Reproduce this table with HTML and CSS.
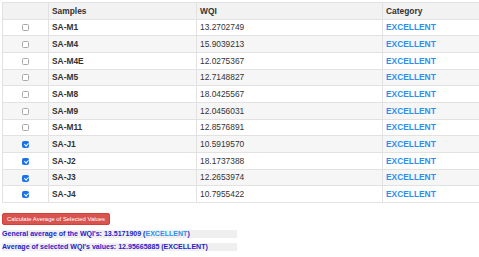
FILE: index.html
```html
<!DOCTYPE html>
<html>
<head>
<meta charset="utf-8">
<link rel="stylesheet" href="styles.css">
</head>
<body>
<div class="page">
  <table class="samples">
    <colgroup>
      <col class="c-check">
      <col class="c-name">
      <col class="c-wqi">
      <col class="c-cat">
    </colgroup>
    <tbody>
      <tr class="head"><th></th><th>Samples</th><th>WQI</th><th>Category</th></tr>
      <tr><td class="chk"><input type="checkbox"></td><td class="name">SA-M1</td><td>13.2702749</td><td class="cat">EXCELLENT</td></tr>
      <tr><td class="chk"><input type="checkbox"></td><td class="name">SA-M4</td><td>15.9039213</td><td class="cat">EXCELLENT</td></tr>
      <tr><td class="chk"><input type="checkbox"></td><td class="name">SA-M4E</td><td>12.0275367</td><td class="cat">EXCELLENT</td></tr>
      <tr><td class="chk"><input type="checkbox"></td><td class="name">SA-M5</td><td>12.7148827</td><td class="cat">EXCELLENT</td></tr>
      <tr><td class="chk"><input type="checkbox"></td><td class="name">SA-M8</td><td>18.0425567</td><td class="cat">EXCELLENT</td></tr>
      <tr><td class="chk"><input type="checkbox"></td><td class="name">SA-M9</td><td>12.0456031</td><td class="cat">EXCELLENT</td></tr>
      <tr><td class="chk"><input type="checkbox"></td><td class="name">SA-M11</td><td>12.8576891</td><td class="cat">EXCELLENT</td></tr>
      <tr><td class="chk"><input type="checkbox" checked></td><td class="name">SA-J1</td><td>10.5919570</td><td class="cat">EXCELLENT</td></tr>
      <tr><td class="chk"><input type="checkbox" checked></td><td class="name">SA-J2</td><td>18.1737388</td><td class="cat">EXCELLENT</td></tr>
      <tr><td class="chk"><input type="checkbox" checked></td><td class="name">SA-J3</td><td>12.2653974</td><td class="cat">EXCELLENT</td></tr>
      <tr><td class="chk"><input type="checkbox" checked></td><td class="name">SA-J4</td><td>10.7955422</td><td class="cat">EXCELLENT</td></tr>
    </tbody>
  </table>
  <button class="calc" type="button">Calculate Average of Selected Values</button>
  <div class="result">General average of the WQI's: 13.5171909 (<span class="light">EXCELLENT</span>)</div>
  <div class="result">Average of selected WQI's values: 12.95665885 (EXCELLENT)</div>
</div>
</body>
</html>
```
FILE: styles.css
```css
html, body {
  margin: 0;
  padding: 0;
  background: #ffffff;
}
.page {
  padding: 2px 0 0 2px;
  font-family: "Liberation Sans", Arial, sans-serif;
  color: #333333;
}
.samples {
  border-collapse: collapse;
  table-layout: fixed;
  width: 479px;
  font-size: 8.4px;
}
.c-check { width: 46px; }
.c-name { width: 148px; }
.c-wqi { width: 186px; }
.c-cat { width: 99px; }
.samples th,
.samples td {
  border: 1px solid #e2e2e2;
  padding: 2.5px 3px;
  line-height: 10.67px;
  height: 10.67px;
  text-align: left;
  vertical-align: middle;
  white-space: nowrap;
}
.samples th {
  font-weight: bold;
  color: #333333;
}
.samples tr:nth-child(odd) {
  background: #f6f6f6;
}
.samples tr.head {
  background: #f2f2f2;
}
.samples td.chk {
  text-align: center;
  padding: 0;
}
.samples td.chk input {
  -webkit-appearance: none;
  appearance: none;
  position: relative;
  box-sizing: border-box;
  width: 7px;
  height: 7px;
  margin: 0;
  vertical-align: middle;
  border: 1px solid #a8a8a8;
  border-radius: 1.5px;
  background: #ffffff;
}
.samples td.chk input:checked {
  background: #1a73e8;
  border-color: #1a73e8;
}
.samples td.chk input:checked::after {
  content: "";
  position: absolute;
  left: 1.5px;
  top: 0px;
  width: 1.5px;
  height: 3px;
  border: solid #ffffff;
  border-width: 0 1px 1px 0;
  transform: rotate(45deg);
}
.samples td.name {
  font-weight: bold;
}
.samples td.cat {
  font-weight: bold;
  color: #2b8ff0;
}
.calc {
  display: block;
  margin: 10px 0 0 0;
  padding: 1.5px 4px;
  font-family: "Liberation Sans", Arial, sans-serif;
  font-size: 5.9px;
  line-height: 7px;
  color: #ffffff;
  background: #d9534f;
  border: 1px solid #d43f3a;
  border-radius: 2px;
}
.result {
  width: 235px;
  margin-top: 5px;
  background: #efefef;
  color: #1f22cc;
  font-weight: bold;
  font-size: 7.05px;
  line-height: 8px;
}
.result .light {
  color: #2f8ff0;
}
```
